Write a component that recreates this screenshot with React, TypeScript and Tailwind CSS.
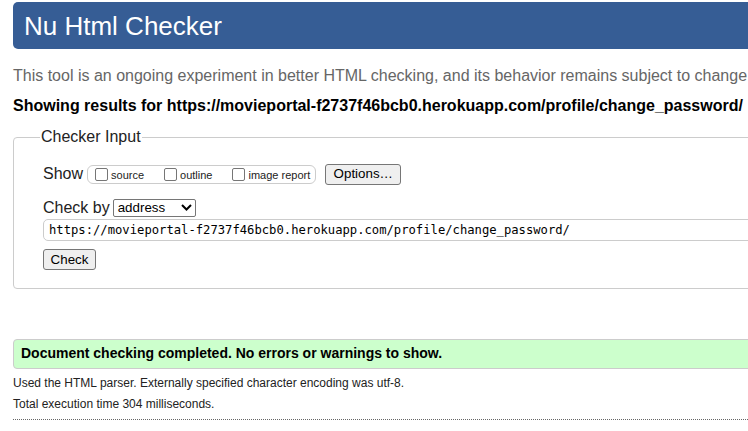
import React from "react";

const url = "https://movieportal-f2737f46bcb0.herokuapp.com/profile/change_password/";

function Box({ label }: { label: string }) {
  return (
    <span className="flex items-center">
      <span className="w-[13px] h-[13px] border border-[#767676] rounded-[2px] bg-white" />
      <span className="ml-[3px] text-[11px] leading-none text-[#222] pt-[2px]">{label}</span>
    </span>
  );
}

export default function App() {
  return (
    <div className="w-[748px] h-[431px] overflow-hidden bg-white font-['Liberation_Sans',Arial,sans-serif] text-[#222]">
      <div className="w-[1000px] pl-[13px]">
        <div className="mt-[2px] h-[47px] bg-[#365d95] rounded-[5px] flex items-center pl-[11px]">
          <h1 className="text-[26px] text-white leading-none">Nu Html Checker</h1>
        </div>

        <p className="mt-[17px] text-[16px] leading-[20px] text-[#666] whitespace-nowrap">
          This tool is an ongoing experiment in better HTML checking, and its behavior remains subject to change
        </p>
        <p className="mt-[10px] text-[16px] leading-[20px] font-bold text-black whitespace-nowrap">
          Showing results for {url}
        </p>

        <fieldset className="mt-[11px] border border-[#ccc] rounded-[4px] pl-[29px] pb-[17px]">
          <legend className="-ml-[3px] px-[1px] text-[16px] leading-[20px] text-[#222]">Checker Input</legend>

          <div className="mt-[16px] h-[22px] flex items-center">
            <span className="text-[16px]">Show</span>
            <div className="ml-[4px] h-[19px] border border-[#ccc] rounded-[6px] flex items-center pl-[7px] pr-[5px]">
              <Box label="source" />
              <span className="w-[20px]" />
              <Box label="outline" />
              <span className="w-[20px]" />
              <Box label="image report" />
            </div>
            <button className="ml-[9px] h-[21px] w-[76px] bg-[#efefef] border border-[#767676] rounded-[3px] text-[13.33px] text-black leading-none">
              Options…
            </button>
          </div>

          <div className="mt-[12px] h-[21px] flex items-center">
            <span className="text-[16px]">Check by</span>
            <div className="ml-[3px] w-[83px] h-[18px] border border-[#767676] rounded-[2px] flex items-center justify-between pl-[4px] pr-[3px] text-[13.33px] text-black">
              <span>address</span>
              <svg width="11" height="7" viewBox="0 0 11 7" fill="none" stroke="#000" strokeWidth="2">
                <path d="M1 1l4.5 4.5L10 1" />
              </svg>
            </div>
          </div>

          <div className="mt-[1px] h-[22px] border border-[#ccc] rounded-l-[5px] flex items-center pl-[5px] font-['DejaVu_Sans_Mono',monospace] text-[12.2px] text-black">
            {url}
          </div>

          <button className="mt-[8px] h-[21px] w-[53px] bg-[#efefef] border border-[#767676] rounded-[3px] text-[13.33px] text-black leading-none">
            Check
          </button>
        </fieldset>

        <div className="mt-[50px] h-[30px] bg-[#ccffcc] border border-[#ccc] rounded-[4px] flex items-center pl-[7px]">
          <span className="text-[14px] font-bold text-black">Document checking completed. No errors or warnings to show.</span>
        </div>

        <p className="mt-[6px] text-[12px] leading-[16px] text-[#222]">
          Used the HTML parser. Externally specified character encoding was utf-8.
        </p>
        <p className="mt-[5px] text-[12px] leading-[16px] text-[#222]">Total execution time 304 milliseconds.</p>
        <div className="mt-[7px] border-t border-dotted border-[#666]" />
      </div>
    </div>
  );
}
